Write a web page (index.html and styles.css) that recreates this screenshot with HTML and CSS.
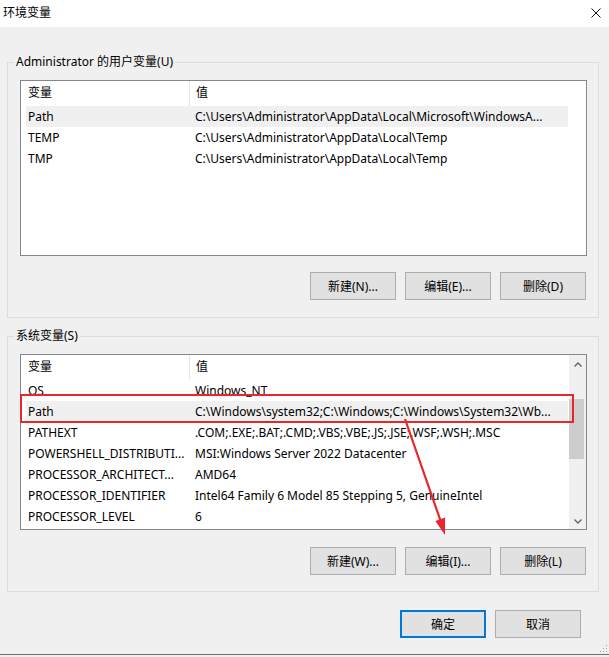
FILE: index.html
```html
<!DOCTYPE html>
<html lang="zh-CN">
<head>
    <meta charset="UTF-8">
    <title>环境变量</title>
    <link rel="stylesheet" href="styles.css">
</head>
<body>
    <div class="window">
        <div class="titlebar">
            <span class="title">环境变量</span>
            <svg class="close" width="10" height="10" viewBox="0 0 10 10">
                <path d="M0.5 0.5 L9.5 9.5 M9.5 0.5 L0.5 9.5" stroke="#111" stroke-width="1" fill="none"/>
            </svg>
        </div>

        <div class="content">
            <fieldset class="group">
                <legend>Administrator 的用户变量(U)</legend>
                <div class="list">
                    <div class="list-body">
                        <div class="list-head">
                            <div class="cell-name">变量</div>
                            <div class="cell-value">值</div>
                        </div>
                        <div class="row selected"><div class="cell-name">Path</div><div class="cell-value">C:\Users\Administrator\AppData\Local\Microsoft\WindowsA...</div></div>
                        <div class="row"><div class="cell-name">TEMP</div><div class="cell-value">C:\Users\Administrator\AppData\Local\Temp</div></div>
                        <div class="row"><div class="cell-name">TMP</div><div class="cell-value">C:\Users\Administrator\AppData\Local\Temp</div></div>
                    </div>
                    <div class="scroll-space"></div>
                </div>
                <div class="actions">
                    <button>新建(N)...</button>
                    <button>编辑(E)...</button>
                    <button>删除(D)</button>
                </div>
            </fieldset>

            <fieldset class="group second">
                <legend>系统变量(S)</legend>
                <div class="list">
                    <div class="list-body">
                        <div class="list-head">
                            <div class="cell-name">变量</div>
                            <div class="cell-value">值</div>
                        </div>
                        <div class="row"><div class="cell-name">OS</div><div class="cell-value">Windows_NT</div></div>
                        <div class="row selected"><div class="cell-name">Path</div><div class="cell-value">C:\Windows\system32;C:\Windows;C:\Windows\System32\Wb...</div></div>
                        <div class="row"><div class="cell-name">PATHEXT</div><div class="cell-value">.COM;.EXE;.BAT;.CMD;.VBS;.VBE;.JS;.JSE;.WSF;.WSH;.MSC</div></div>
                        <div class="row"><div class="cell-name">POWERSHELL_DISTRIBUTI...</div><div class="cell-value">MSI:Windows Server 2022 Datacenter</div></div>
                        <div class="row"><div class="cell-name">PROCESSOR_ARCHITECT...</div><div class="cell-value">AMD64</div></div>
                        <div class="row"><div class="cell-name">PROCESSOR_IDENTIFIER</div><div class="cell-value">Intel64 Family 6 Model 85 Stepping 5, GenuineIntel</div></div>
                        <div class="row"><div class="cell-name">PROCESSOR_LEVEL</div><div class="cell-value">6</div></div>
                    </div>
                    <div class="scrollbar">
                        <div class="scroll-btn">
                            <svg width="8" height="5" viewBox="0 0 8 5"><path d="M0.5 4.5 L4 1 L7.5 4.5" stroke="#606060" stroke-width="1.3" fill="none"/></svg>
                        </div>
                        <div class="scroll-track"><div class="scroll-thumb"></div></div>
                        <div class="scroll-btn">
                            <svg width="8" height="5" viewBox="0 0 8 5"><path d="M0.5 0.5 L4 4 L7.5 0.5" stroke="#606060" stroke-width="1.3" fill="none"/></svg>
                        </div>
                    </div>
                </div>
                <div class="actions">
                    <button>新建(W)...</button>
                    <button>编辑(I)...</button>
                    <button>删除(L)</button>
                </div>
            </fieldset>

            <div class="dialog-actions">
                <button class="default">确定</button>
                <button>取消</button>
            </div>
        </div>

        <!-- 标注：红框和箭头 -->
        <div class="mark-box"></div>
        <svg class="mark-arrow" width="609" height="657" viewBox="0 0 609 657">
            <line x1="405" y1="419" x2="441" y2="522" stroke="#e8262b" stroke-width="2.2"/>
            <polygon points="445,535 445,517.6 435.4,521" fill="#e8262b"/>
        </svg>
        <svg class="grip" width="9" height="9" viewBox="0 0 9 9">
            <rect x="7" y="1" width="1" height="1" fill="#a0a0a0"/>
            <rect x="4" y="4" width="1" height="1" fill="#a0a0a0"/>
            <rect x="7" y="4" width="1" height="1" fill="#a0a0a0"/>
            <rect x="1" y="7" width="1" height="1" fill="#a0a0a0"/>
            <rect x="4" y="7" width="1" height="1" fill="#a0a0a0"/>
            <rect x="7" y="7" width="1" height="1" fill="#a0a0a0"/>
        </svg>
    </div>
</body>
</html>
```

FILE: styles.css
```css
* {
    box-sizing: border-box;
}
body {
    margin: 0;
    background-color: #f0f0f0;
    font-family: "Noto Sans", "Noto Sans CJK SC", sans-serif;
    font-size: 12px;
    color: #000;
}
.window {
    position: relative;
    width: 609px;
    height: 655px;
    border-bottom: 1px solid #6e6e6e;
    overflow: hidden;
}
.titlebar {
    height: 27px;
    background: #fff;
    display: flex;
    align-items: center;
    justify-content: space-between;
    padding: 0 8px 2px 3px;
}
.title {
    line-height: 16px;
}
.content {
    padding: 27px 10px 0 7px;
}
.group {
    margin: 0;
    padding: 0 11px 17px 12px;
    border: 1px solid #dcdcdc;
    min-width: 0;
}
.group.second {
    margin-top: 10px;
    padding-bottom: 16px;
}
.group legend {
    padding: 0 2px;
    margin-left: -6px;
    line-height: 16px;
}
.list {
    margin-top: 10px;
    height: 176px;
    border: 1px solid #828790;
    background: #fff;
    display: flex;
}
.list-body {
    flex: 1;
    padding: 0 1px 0 5px;
    overflow: hidden;
}
.list-head,
.row {
    display: grid;
    grid-template-columns: 163px 1fr;
    white-space: nowrap;
}
.list-head {
    height: 25px;
    line-height: 24px;
}
.list-head .cell-value {
    border-left: 1px solid #e5e5e5;
}
.row {
    height: 21px;
    line-height: 21px;
}
.row.selected {
    background: #f0f0f0;
}
.cell-name {
    padding-left: 2px;
    overflow: hidden;
}
.cell-value {
    padding-left: 6px;
    overflow: hidden;
}
.scroll-space {
    width: 17px;
}
.scrollbar {
    width: 17px;
    background: #f0f0f0;
    display: flex;
    flex-direction: column;
}
.scroll-btn {
    height: 17px;
    display: flex;
    align-items: center;
    justify-content: center;
    padding-top: 2px;
}
.scroll-btn svg {
    display: block;
}
.scroll-track {
    flex: 1;
    padding-top: 27px;
}
.scroll-thumb {
    height: 60px;
    margin-right: 2px;
    background: #cdcdcd;
}
.actions {
    display: flex;
    justify-content: flex-end;
    gap: 9px;
    margin-top: 16px;
    padding-right: 1px;
}
.second .actions {
    margin-top: 17px;
}
button {
    width: 86px;
    height: 28px;
    margin: 0;
    padding: 0;
    background: #e1e1e1;
    border: 1px solid #adadad;
    border-radius: 0;
    font-family: inherit;
    font-size: 12px;
    color: #000;
}
button.default {
    border: 2px solid #0078d7;
}
.dialog-actions {
    display: flex;
    justify-content: flex-end;
    gap: 9px;
    margin-top: 18px;
    padding-right: 18px;
}
.mark-box {
    position: absolute;
    left: 20px;
    top: 394px;
    width: 554px;
    height: 29px;
    border: 2px solid #e8262b;
}
.mark-arrow {
    position: absolute;
    left: 0;
    top: 0;
}
.grip {
    position: absolute;
    right: 1px;
    bottom: 1px;
}
```
